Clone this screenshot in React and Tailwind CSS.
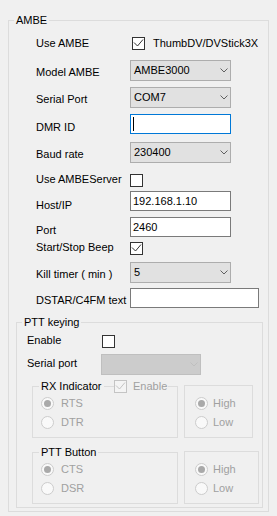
import React from 'react'

function Check({ checked, disabled, className = '' }) {
  return (
    <span
      className={`flex h-[13px] w-[13px] shrink-0 items-center justify-center border ${
        disabled ? 'border-[#c4c4c4] bg-[#f4f4f4]' : 'border-[#333333] bg-white'
      } ${className}`}
    >
      {checked && (
        <svg width="11" height="11" viewBox="0 0 11 11">
          <polyline
            points="1,4.5 4.5,8 10,1.5"
            fill="none"
            stroke={disabled ? '#c4c4c4' : '#333333'}
            strokeWidth="1"
          />
        </svg>
      )}
    </span>
  )
}

function Radio({ checked, label, gap }) {
  return (
    <div className="flex h-[13px] items-center">
      <span className="flex h-[13px] w-[13px] shrink-0 items-center justify-center rounded-full border border-[#cccccc] bg-[#f9f9f9]">
        {checked && <span className="h-[7px] w-[7px] rounded-full bg-[#a9a9a9]" />}
      </span>
      <span className={`${gap} leading-[13px] text-[#a0a0a0]`}>{label}</span>
    </div>
  )
}

function Chevron({ color }) {
  return (
    <svg width="8" height="5" viewBox="0 0 8 5">
      <path d="M0.5 0.5 L4 4 L7.5 0.5" fill="none" stroke={color} strokeWidth="1" />
    </svg>
  )
}

function Combo({ value, disabled, className = 'w-[101px]' }) {
  return (
    <div
      className={`flex h-[21px] shrink-0 items-center justify-between border pl-[3px] pr-[2px] ${
        disabled ? 'border-[#bfbfbf] bg-[#cccccc]' : 'border-[#adadad] bg-[#e1e1e1]'
      } ${className}`}
    >
      <span>{value}</span>
      <Chevron color={disabled ? '#bfbfbf' : '#606060'} />
    </div>
  )
}

function TextBox({ value, focused, className = 'w-[101px]' }) {
  return (
    <div
      className={`flex h-[20px] shrink-0 items-center border bg-white pl-[2px] ${
        focused ? 'border-[#0078d7]' : 'border-[#7a7a7a]'
      } ${className}`}
    >
      {focused ? <span className="h-[14px] w-px bg-black" /> : <span>{value}</span>}
    </div>
  )
}

function Row({ h, lt, label, children }) {
  return (
    <div className={`flex items-start ${h}`}>
      <div className={`w-[121px] shrink-0 pl-[27px] ${lt}`}>{label}</div>
      {children}
    </div>
  )
}

export default function App() {
  return (
    <div className="h-[516px] w-[277px] overflow-hidden bg-[#f0f0f0] pl-[8px] pt-[13px] font-['Liberation_Sans',Arial,sans-serif] text-[11px] leading-[13px] text-black">
      <fieldset className="w-[261px] border border-[#dcdcdc] pb-[3px]">
        <legend className="ml-[5px] px-[2px] leading-[14px]">AMBE</legend>

        <Row h="h-[33px]" lt="mt-[10px]" label="Use AMBE">
          <Check checked className="ml-[2px] mt-[10px]" />
          <span className="ml-[8px] mt-[10px]">ThumbDV/DVStick3X</span>
        </Row>
        <Row h="h-[27px]" lt="mt-[6px]" label="Model AMBE">
          <Combo value="AMBE3000" />
        </Row>
        <Row h="h-[27px]" lt="mt-[6px]" label="Serial Port">
          <Combo value="COM7" />
        </Row>
        <Row h="h-[28px]" lt="mt-[7px]" label="DMR ID">
          <TextBox focused />
        </Row>
        <Row h="h-[31px]" lt="mt-[6px]" label="Baud rate">
          <Combo value="230400" />
        </Row>
        <Row h="h-[18px]" lt="mt-0" label="Use AMBEServer">
          <Check className="mt-[1px]" />
        </Row>
        <Row h="h-[26px]" lt="mt-[8px]" label="Host/IP">
          <TextBox value="192.168.1.10" />
        </Row>
        <Row h="h-[24px]" lt="mt-[7px]" label="Port">
          <TextBox value="2460" />
        </Row>
        <Row h="h-[21px]" lt="mt-0" label="Start/Stop Beep">
          <Check checked className="mt-[1px]" />
        </Row>
        <Row h="h-[26px]" lt="mt-[6px]" label="Kill timer ( min )">
          <Combo value="5" />
        </Row>
        <Row h="h-[27px]" lt="mt-[6px]" label="DSTAR/C4FM text">
          <TextBox value="" className="w-[129px]" />
        </Row>

        <fieldset className="ml-[7px] w-[247px] border border-[#dcdcdc] pb-[3px]">
          <legend className="ml-[5px] px-[2px] leading-[14px]">PTT keying</legend>

          <div className="flex h-[25px] items-start">
            <div className="mt-[5px] w-[85px] shrink-0 pl-[10px]">Enable</div>
            <Check className="mt-[6px]" />
          </div>
          <div className="flex h-[25px] items-start">
            <div className="mt-[3px] w-[84px] shrink-0 pl-[10px]">Serial port</div>
            <Combo value="" disabled className="w-[100px]" />
          </div>

          <div className="ml-[15px] flex items-end gap-[6px]">
            <div className="relative">
              <fieldset className="h-[59px] w-[146px] border border-[#dcdcdc]">
                <legend className="ml-[6px] px-[2px] leading-[14px]">RX Indicator</legend>
                <div className="flex flex-col gap-[6px] pl-[8px] pt-[4px]">
                  <Radio checked label="RTS" gap="ml-[7px]" />
                  <Radio label="DTR" gap="ml-[7px]" />
                </div>
              </fieldset>
              <div className="absolute left-[82px] top-[1px] flex items-center bg-[#f0f0f0] pr-[1px]">
                <Check checked disabled />
                <span className="ml-[6px] text-[#a0a0a0]">Enable</span>
              </div>
            </div>
            <div className="flex h-[53px] w-[69px] flex-col gap-[6px] border border-[#dcdcdc] pl-[10px] pt-[11px]">
              <Radio checked label="High" gap="ml-[5px]" />
              <Radio label="Low" gap="ml-[5px]" />
            </div>
          </div>

          <div className="ml-[15px] mt-[7px] flex items-end gap-[6px]">
            <fieldset className="h-[59px] w-[146px] border border-[#dcdcdc]">
              <legend className="ml-[6px] px-[2px] leading-[14px]">PTT Button</legend>
              <div className="flex flex-col gap-[6px] pl-[8px] pt-[4px]">
                <Radio checked label="CTS" gap="ml-[7px]" />
                <Radio label="DSR" gap="ml-[7px]" />
              </div>
            </fieldset>
            <div className="flex h-[53px] w-[75px] flex-col gap-[6px] border border-[#dcdcdc] pl-[10px] pt-[11px]">
              <Radio checked label="High" gap="ml-[5px]" />
              <Radio label="Low" gap="ml-[5px]" />
            </div>
          </div>
        </fieldset>
      </fieldset>
    </div>
  )
}
